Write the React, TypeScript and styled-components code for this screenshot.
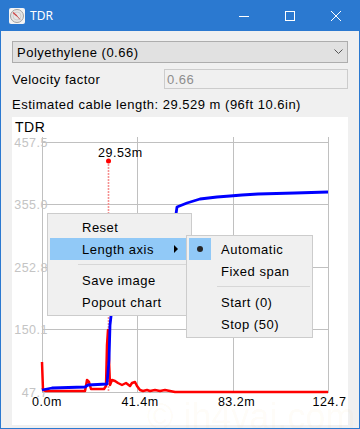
import React from "react";
import styled, { createGlobalStyle } from "styled-components";

const GlobalStyle = createGlobalStyle`
  html, body {
    margin: 0;
    padding: 0;
    background: #f0f0f0;
  }
  body {
    font-family: "Liberation Sans", Arial, sans-serif;
  }
`;

const Window = styled.div`
  position: relative;
  width: 360px;
  height: 429px;
  box-sizing: border-box;
  border: 1px solid #2b79d0;
  border-top: none;
  background: #f0f0f0;
  display: flex;
  flex-direction: column;
  overflow: hidden;
`;

const TitleBar = styled.div`
  height: 31px;
  flex: none;
  background: #2b79d0;
  display: flex;
  align-items: center;
  color: #fff;
`;

const AppIcon = styled.svg`
  width: 16px;
  height: 16px;
  margin-left: 8px;
`;

const Title = styled.span`
  margin-left: 5px;
  font-family: "Noto Sans", "Open Sans", sans-serif;
  font-size: 12px;
  flex: 1;
`;

const CaptionButton = styled.div`
  width: 46px;
  height: 31px;
  display: flex;
  align-items: center;
  justify-content: center;
`;

const Body = styled.div`
  flex: 1;
  display: flex;
  flex-direction: column;
  padding: 10px 11px 3px 11px;
  font-size: 13px;
  letter-spacing: 0.5px;
  color: #000;
`;

const Combo = styled.div`
  height: 22px;
  box-sizing: border-box;
  border: 1px solid #adadad;
  background: #e1e1e1;
  display: flex;
  align-items: center;
  padding: 0 4px 0 4px;
`;

const ComboText = styled.span`
  flex: 1;
`;

const Row = styled.div`
  margin-top: 6px;
  height: 20px;
  display: flex;
  align-items: center;
`;

const Field = styled.div`
  margin-left: auto;
  width: 184px;
  height: 20px;
  box-sizing: border-box;
  border: 1px solid #cccccc;
  background: #f0f0f0;
  color: #8d8d8d;
  display: flex;
  align-items: center;
  padding-left: 2px;
`;

const Info = styled.div`
  margin-top: 8px;
  height: 16px;
  line-height: 16px;
`;

const ChartPanel = styled.div`
  position: relative;
  margin-top: 4px;
  flex: 1;
  background: #fff;
`;

const ChartSvg = styled.svg`
  display: block;
  width: 336px;
  height: 308px;
  font-family: "Liberation Sans", Arial, sans-serif;
`;

const Menu = styled.div<{ $left: number; $top: number; $width: number; $padRight: number }>`
  position: absolute;
  left: ${(p) => p.$left}px;
  top: ${(p) => p.$top}px;
  width: ${(p) => p.$width}px;
  box-sizing: border-box;
  background: #f0f0f0;
  border: 1px solid #cccccc;
  padding: 2px ${(p) => p.$padRight}px 2px 2px;
  font-size: 13px;
  letter-spacing: 0.5px;
`;

const MenuItem = styled.div<{ $active?: boolean }>`
  height: 22px;
  display: flex;
  align-items: center;
  background: ${(p) => (p.$active ? "#91c9f7" : "transparent")};
`;

const CheckCol = styled.div<{ $checked?: boolean }>`
  width: 22px;
  height: 22px;
  flex: none;
  display: flex;
  align-items: center;
  justify-content: center;
  background: ${(p) => (p.$checked ? "#91c9f7" : "transparent")};
`;

const Bullet = styled.span`
  width: 6px;
  height: 6px;
  border-radius: 50%;
  background: #262626;
`;

const ItemLabel = styled.span`
  margin-left: 10px;
`;

const SubArrow = styled.span`
  margin-left: auto;
  margin-right: 8px;
  width: 0;
  height: 0;
  border-top: 4px solid transparent;
  border-bottom: 4px solid transparent;
  border-left: 4px solid #000;
`;

const Separator = styled.div`
  height: 1px;
  margin: 4px 0 4px 28px;
  background: #d7d7d7;
`;

const Watermark = styled.div`
  position: absolute;
  left: 146px;
  bottom: -10px;
  font-family: "Liberation Sans", Arial, sans-serif;
  font-size: 36px;
  color: rgba(235, 170, 60, 0.05);
  pointer-events: none;
  white-space: nowrap;
`;

const xGrid = [30.5, 125.5, 221.5, 316.5];
const yGrid = [25.5, 87.5, 150.5, 212.5, 275.5];
const yLabels = ["457.5", "355.0", "252.8", "150.1", "47.7"];
const xLabels: [number, string][] = [
  [35, "0.0m"],
  [128, "41.4m"],
  [224.5, "83.2m"],
  [317.5, "124.7"],
];

// traces in window coordinates, shifted to the panel origin (12,117)
const toPts = (pts: number[][]) => pts.map(([x, y]) => `${x - 12},${y - 117}`).join(" ");

const bluePts = toPts([
  [42, 390], [52, 388], [85, 387], [88, 385], [107, 384], [109, 360], [110, 325],
  [114, 290], [140, 250], [176, 214], [177, 207], [187, 203], [200, 199], [217, 197],
  [230, 196], [242, 195], [258, 194], [295, 193], [328, 192],
]);

const redPts = toPts([
  [42, 362], [43, 390], [46, 391], [85, 391], [86, 386], [87, 380], [89, 382], [91, 389],
  [104, 389], [106, 386], [107, 345], [108, 330], [109, 360], [110, 385], [112, 380],
  [115, 381], [118, 383], [122, 385], [126, 383], [130, 386], [132, 383], [135, 382],
  [137, 386], [140, 390], [143, 391], [147, 390], [150, 391], [155, 390], [160, 391],
  [165, 390], [170, 391], [175, 392], [328, 392],
]);

const Chart = () => (
  <ChartSvg viewBox="0 0 336 308">
    <text x={3} y={15} fontSize={14} fill="#000">TDR</text>
    {xGrid.map((x) => (
      <line key={x} x1={x} y1={20} x2={x} y2={276} stroke="#c0c0c0" strokeWidth={1} />
    ))}
    {yGrid.map((y) => (
      <line key={y} x1={30} y1={y} x2={317} y2={y} stroke="#c0c0c0" strokeWidth={1} />
    ))}
    {yLabels.map((t, i) => (
      <text key={t} x={36} y={yGrid[i] + 4.5} fontSize={12.5} fill="#c4c4c4" textAnchor="end">
        {t}
      </text>
    ))}
    {xLabels.map(([x, t]) => (
      <text key={t} x={x} y={289} fontSize={12.5} fill="#000" textAnchor="middle">
        {t}
      </text>
    ))}
    <line x1={96.5} y1={44} x2={96.5} y2={274} stroke="#f59090" strokeWidth={1.6} strokeDasharray="2 1" />
    <polyline points={redPts} fill="none" stroke="#ff0000" strokeWidth={2.5} strokeLinejoin="round" />
    <polyline points={bluePts} fill="none" stroke="#0000ff" strokeWidth={2.8} strokeLinejoin="round" />
    <circle cx={96.5} cy={44} r={2.5} fill="#ff0000" />
    <text x={86} y={40} fontSize={12.5} fill="#000">29.53m</text>
  </ChartSvg>
);

const App = () => (
  <>
    <GlobalStyle />
    <Window>
      <TitleBar>
        <AppIcon viewBox="0 0 16 16">
          <rect x="0" y="0" width="16" height="16" rx="2" fill="#f4f4f4" />
          <circle cx="8" cy="8" r="6.5" fill="#e6e6e6" stroke="#a0a0a0" strokeWidth="1" />
          <circle cx="8" cy="8" r="4" fill="none" stroke="#c8c8c8" strokeWidth="0.8" />
          <line x1="8" y1="8" x2="4" y2="4.5" stroke="#d04040" strokeWidth="1.2" />
          <line x1="8" y1="8" x2="11" y2="11.5" stroke="#c06060" strokeWidth="1" />
        </AppIcon>
        <Title>TDR</Title>
        <CaptionButton>
          <svg width="10" height="10" viewBox="0 0 10 10">
            <line x1="0" y1="5.5" x2="10" y2="5.5" stroke="#fff" strokeWidth="1" />
          </svg>
        </CaptionButton>
        <CaptionButton>
          <svg width="10" height="10" viewBox="0 0 10 10">
            <rect x="0.5" y="0.5" width="9" height="9" fill="none" stroke="#fff" strokeWidth="1" />
          </svg>
        </CaptionButton>
        <CaptionButton>
          <svg width="10" height="10" viewBox="0 0 10 10">
            <path d="M0 0 L10 10 M10 0 L0 10" stroke="#fff" strokeWidth="1" />
          </svg>
        </CaptionButton>
      </TitleBar>
      <Body>
        <Combo>
          <ComboText>Polyethylene (0.66)</ComboText>
          <svg width="9" height="6" viewBox="0 0 9 6">
            <polyline points="0.5,0.5 4.5,4.5 8.5,0.5" fill="none" stroke="#555" strokeWidth="1" />
          </svg>
        </Combo>
        <Row>
          <span>Velocity factor</span>
          <Field>0.66</Field>
        </Row>
        <Info>Estimated cable length: 29.529 m (96ft 10.6in)</Info>
        <ChartPanel>
          <Chart />
          <Menu $left={35} $top={96} $width={145} $padRight={5}>
            <MenuItem>
              <CheckCol />
              <ItemLabel>Reset</ItemLabel>
            </MenuItem>
            <MenuItem $active>
              <CheckCol />
              <ItemLabel>Length axis</ItemLabel>
              <SubArrow />
            </MenuItem>
            <Separator />
            <MenuItem>
              <CheckCol />
              <ItemLabel>Save image</ItemLabel>
            </MenuItem>
            <MenuItem>
              <CheckCol />
              <ItemLabel>Popout chart</ItemLabel>
            </MenuItem>
          </Menu>
          <Menu $left={174} $top={118} $width={127} $padRight={2}>
            <MenuItem>
              <CheckCol $checked>
                <Bullet />
              </CheckCol>
              <ItemLabel>Automatic</ItemLabel>
            </MenuItem>
            <MenuItem>
              <CheckCol />
              <ItemLabel>Fixed span</ItemLabel>
            </MenuItem>
            <Separator />
            <MenuItem>
              <CheckCol />
              <ItemLabel>Start (0)</ItemLabel>
            </MenuItem>
            <MenuItem>
              <CheckCol />
              <ItemLabel>Stop (50)</ItemLabel>
            </MenuItem>
          </Menu>
        </ChartPanel>
      </Body>
      <Watermark aria-hidden="true">© jh4vaj.com</Watermark>
    </Window>
  </>
);

export default App;
